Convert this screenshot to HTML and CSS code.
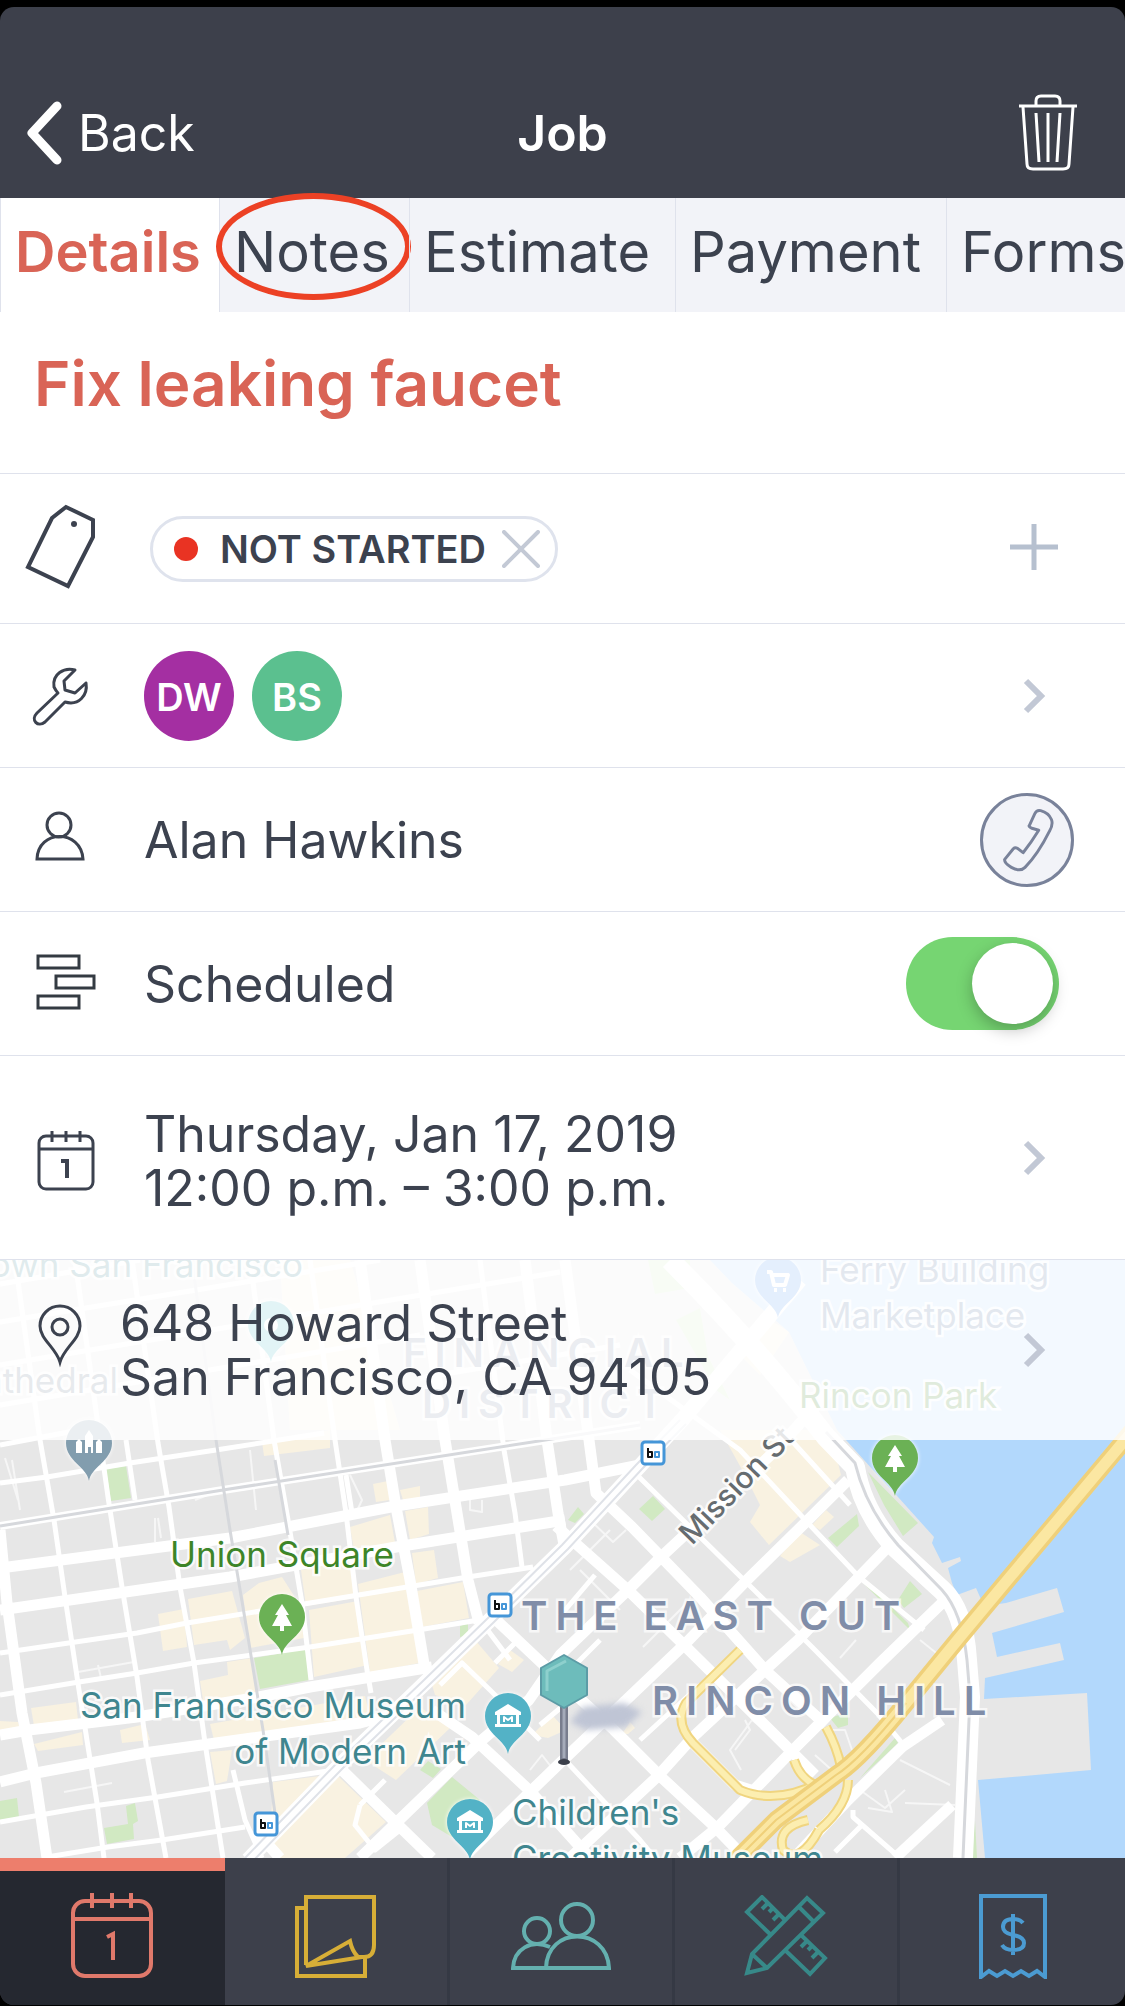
FILE: index.html
```html
<!DOCTYPE html>
<html lang="en">
<head>
    <meta charset="utf-8">
    <meta name="viewport" content="width=device-width, initial-scale=1">
    <title>Job</title>
    <link rel="stylesheet" href="styles.css">
</head>
<body>
<div class="app">
    <header class="header">
        <button type="button" class="back">
            <svg width="36" height="64" viewBox="0 0 36 64"><path d="M31 5 L6 32 L31 59" fill="none" stroke="#fff" stroke-width="9" stroke-linecap="round" stroke-linejoin="round"/></svg>
            Back
        </button>
        <h1>Job</h1>
        <button type="button" class="trash" aria-label="Delete job">
            <svg width="58" height="78" viewBox="0 0 58 78" fill="none" stroke="#fff" stroke-width="3">
                <path d="M0 12 H58"/>
                <path d="M17 11 V7 Q17 2 22 2 H36 Q41 2 41 7 V11"/>
                <path d="M4 13 L8 70 Q8 75 14 75 H44 Q50 75 50 70 L54 13"/>
                <path d="M17 19 L20 68 M29 19 V68 M41 19 L38 68"/>
            </svg>
        </button>
    </header>

    <nav class="tabs">
        <button type="button" class="active">Details</button>
        <button type="button" class="marked">Notes</button>
        <button type="button">Estimate</button>
        <button type="button">Payment</button>
        <button type="button">Forms</button>
    </nav>

    <main class="details">
        <h2>Fix leaking faucet</h2>

        <div class="row row-tags">
            <svg class="icon" viewBox="0 3 80 84" height="84"><path d="M46 3 L32 14 L8 63 L48 82 L73 33 V16 Z" fill="none" stroke="#3c424f" stroke-width="4"/><circle cx="54" cy="20" r="3" fill="#3c424f"/></svg>
            <div class="content">
                <span class="tag">
                    <span class="dot"></span>
                    NOT STARTED
                    <button type="button" aria-label="Remove tag"><svg width="38" height="38" viewBox="0 0 38 38"><path d="M2 2 L36 36 M36 2 L2 36" stroke="#c3c9d5" stroke-width="4" stroke-linecap="round"/></svg></button>
                </span>
            </div>
            <button type="button" aria-label="Add tag"><svg width="50" height="50" viewBox="0 3 50 50"><path d="M25 3 V49 M1 26 H49" stroke="#b6c0cf" stroke-width="5"/></svg></button>
        </div>

        <div class="row">
            <svg class="icon" viewBox="0 0 80 80" height="80"><path d="M55 14 C44 11 32 18 34 31 Q36 35 38 37 L17 57 C10 64 18 72 25 66 L45 46 C59 50 68 39 66 27 L55 37 L45 34 L44 25 Z" fill="none" stroke="#3c424f" stroke-width="3" stroke-linejoin="round"/></svg>
            <div class="content people">
                <span class="avatar purple">DW</span>
                <span class="avatar green">BS</span>
            </div>
            <button type="button" aria-label="Edit team"><svg class="chevron" viewBox="0 0 50 50"><path d="M17 10 L32 25 L17 40"/></svg></button>
        </div>

        <div class="row row-customer">
            <svg class="icon" viewBox="0 1 80 80" height="80" fill="none" stroke="#3c424f" stroke-width="3"><circle cx="39" cy="26" r="12"/><path d="M17 60 C18 30 61 30 63 60 Z"/></svg>
            <div class="content">Alan Hawkins</div>
            <button type="button" class="call" aria-label="Call customer"><svg width="88" height="88" viewBox="0 0 90 90"><path d="M47 31 L53 18 Q55 14 59 15 Q67 17 70 24 Q72 29 68 36 Q56 60 43 73 Q38 78 29 73 Q22 69 22 65 L31 54 Q33 52 36 54 L41 58 Q49 48 57 35 L50 33 Q47 32 47 30" fill="none" stroke="#79829a" stroke-width="3" stroke-linejoin="round"/></svg></button>
        </div>

        <div class="row">
            <svg class="icon" viewBox="0 0 80 80" height="80" fill="none" stroke="#343b42" stroke-width="3"><path d="M18 12 H59 V24 H18 Z M36 32 H74 V44 H36 Z M18 52 H59 V64 H18 Z"/></svg>
            <label class="content" for="scheduled">Scheduled</label>
            <input type="checkbox" id="scheduled" class="toggle" checked>
        </div>

        <div class="row row-date">
            <svg class="icon" viewBox="0 4 80 80" height="80" fill="none" stroke="#3c424f" stroke-width="3"><rect x="19" y="19" width="54" height="53" rx="7"/><path d="M19 32 H73 M32 14 V25 M46 14 V25 M60 14 V25"/><path d="M41 44 H47 V61" stroke-width="4"/></svg>
            <div class="content">Thursday, Jan 17, 2019<br>12:00 p.m. – 3:00 p.m.</div>
            <button type="button" aria-label="Edit schedule"><svg class="chevron" viewBox="0 3 50 50"><path d="M17 10 L32 25 L17 40"/></svg></button>
        </div>

        <section class="map">
            <svg class="map-art" viewBox="0 0 1125 598" preserveAspectRatio="xMidYMin slice">
                <defs>
                    <path id="drop" d="M0 37 C-2 23 -23 17 -23 -1 A23 23 0 0 1 23 -1 C23 17 2 23 0 37 Z"/>
                    <path id="tree" d="M0 -14 L7 -3 H4 L10 8 H2 V13 H-2 V8 H-10 L-4 -3 H-7 Z" fill="#fff"/>
                    <g id="museum"><path d="M0 -13 L13 -5 V-2 H-13 V-5 Z M-13 7 H13 V10 H-13 Z M-11 -2 H-8 V7 H-11 Z M8 -2 H11 V7 H8 Z" fill="#fff"/><path d="M-4 5 V0 L0 3 L4 0 V5" fill="none" stroke="#fff" stroke-width="2"/></g>
                    <g id="bike"><rect x="-11" y="-11" width="22" height="22" rx="3" fill="#fff" stroke="#4596d8" stroke-width="3"/><path d="M-5 -5 V4 H-1 V-1 H-5" fill="none" stroke="#111" stroke-width="2"/><path d="M2 -1 H6 V4 H2 Z" fill="none" stroke="#4596d8" stroke-width="2"/></g>
                </defs>
                <rect width="1125" height="598" fill="#e7e7e7"/>

                <!-- commercial blocks -->
                <g fill="#f9f2e1">
                    <path d="M262 182 L330 170 V188 L264 196 Z M280 0 L350 0 L400 170 L290 170 Z"/>
                    <path d="M350 267 L390 255 L396 288 L355 296 Z M373 224 L388 221 L390 240 L376 242 Z M400 230 L420 226 L420 238 L403 240 Z"/>
                    <path d="M405 251 L428 247 L429 274 L410 280 Z M412 293 L434 290 L438 318 L416 324 Z M417 331 L463 322 L469 358 L422 367 Z"/>
                    <path d="M301 310 L350 300 L356 338 L306 346 Z M358 324 L405 312 L424 402 L370 413 Z"/>
                    <path d="M309 350 L358 341 L368 405 L314 417 Z M188 339 L232 331 L245 378 L230 390 L227 380 L194 385 Z M259 323 L282 317 L298 342 L304 378 L250 388 L243 335 Z"/>
                    <path d="M158 354 L184 349 L187 387 L163 391 Z M227 402 L252 398 L258 436 L204 446 L200 421 L228 415 Z"/>
                    <path d="M31 448 L76 442 L78 460 L34 466 Z M34 484 L82 472 L83 485 L38 491 Z M0 461 L18 462 L20 468 L0 472 Z M120 470 L145 464 L150 480 L122 483 Z"/>
                    <path d="M210 464 L365 436 L370 456 L214 480 Z M210 492 L232 490 L227 521 L216 524 Z"/>
                    <path d="M273 522 L336 514 L386 562 L345 598 H277 L270 580 Z"/>
                    <path d="M430 418 L475 380 L499 408 L466 445 L435 435 Z M365 500 L420 447 L450 468 L396 520 Z M510 390 L524 400 L512 412 L498 404 Z M532 475 L552 455 L566 470 L548 478 Z"/>
                    <path d="M720 170 L830 170 L841 215 L805 250 L769 285 L750 262 L760 245 L745 215 Z M780 296 L800 272 L820 285 L790 302 Z M812 265 L826 250 L834 257 L820 270 Z"/>
                    <path d="M622 474 L630 462 L635 468 L628 474 Z M770 60 L789 72 L760 115 L740 95 Z"/>
                </g>

                <!-- parks -->
                <g fill="#d1e9c2">
                    <path d="M106 209 L126 206 L131 238 L111 241 Z M254 398 L306 389 L309 420 L260 429 Z"/>
                    <path d="M0 541 L17 538 L19 557 L0 560 Z M104 568 L128 564 L126 546 L135 543 L138 561 L133 564 L134 579 L107 584 Z"/>
                    <path d="M427 543 L452 517 L480 540 L452 577 L432 565 Z M420 510 L428 501 L441 509 L433 518 Z M460 366 L468 363 L468 375 L460 377 Z"/>
                    <path d="M639 249 L653 236 L665 249 L652 261 Z M568 260 L578 247 L584 254 L575 263 Z M828 278 L857 254 L859 266 L837 287 Z"/>
                    <path d="M868 212 L918 263 L903 276 L884 245 Z M830 458 L848 452 L848 465 L838 468 Z M862 322 L910 370 L908 363 L866 322 Z"/>
                    <path d="M898 340 L910 321 L922 334 L904 348 Z M860 518 L895 478 L898 483 L880 500 Z M972 598 L975 560 L977 598 Z"/>
                    <path d="M648 0 H690 V28 L655 34 Z M676 60 L700 48 L708 96 L730 140 L716 130 Z"/>
                </g>

                <!-- bay and piers -->
                <path d="M837 170 L873 210 L898 237 L934 277 L932 283 L942 303 L960 297 L961 301 L948 308 L952 323 L957 335 L976 328 L984 346 L1006 343 L1057 328 L1064 352 L992 373 L997 397 L1060 383 L1064 400 L985 418 L984 439 L1087 433 L1091 510 L978 520 L985 598 H1125 V0 H710 L732 23 L789 72 Z" fill="#b2d8fc"/>

                <g class="minor">
                    <path d="M5 198 L18 240 M12 200 L20 250 M155 258 V282 M158 258 L161 278 M250 190 L256 250 M350 215 L362 240 L356 253 M470 240 V250 L482 252 V240"/>
                    <path d="M78 412 L134 402 M98 405 L101 418 M64 532 L112 523 M195 240 L215 232 M530 510 L542 495 L552 508 L536 520"/>
                    <path d="M590 260 L613 282 L626 270 M570 310 L610 270 M735 490 L750 470 L745 460 M741 510 L730 490 L752 460 L765 470 M825 470 L845 470 L852 490 M815 495 L834 512"/>
                    <path d="M860 530 L885 548 L905 530 M868 548 L892 552 L885 530 M905 543 L955 545 M900 500 L950 525 M840 398 L856 380 M920 380 L945 400"/>
                    <path d="M643 387 L690 340 M580 310 L620 350 M770 420 L800 450"/>
                </g>

                <g class="street">
                    <path d="M0 185 L90 168 M0 223 L47 217 L130 203 L216 190 L324 173"/>
                    <path d="M0 393 L137 373 L187 363 L310 343 L468 317 L533 307"/>
                    <path d="M0 435 L79 422 L137 413 L194 403 L310 387 L418 370 L479 360"/>
                    <path d="M0 562 L86 547 L158 537 L245 523 L335 510 M47 597 L108 587 L162 580 L245 567"/>
                    <path d="M0 145 L420 75 M0 105 L560 12 M0 62 L380 0 M0 24 L140 0 M420 118 L620 85"/>
                    <path d="M15 0 L40 180 L54 260 L65 337 L79 430 L97 543 L104 598"/>
                    <path d="M75 0 L108 237 L122 327 L137 417 L148 500 L166 598 M126 180 L135 240"/>
                    <path d="M132 0 L158 183 L169 247 L180 327 L194 403 L205 483 L223 598"/>
                    <path d="M250 0 L274 180 L288 260 L302 343 L311 420"/>
                    <path d="M310 0 L335 180 L346 253 L356 337 L367 410 L371 433 M346 215 L352 253"/>
                    <path d="M480 0 L504 190 L515 253 L522 307"/>
                    <path d="M639 217 L747 323 L812 387 L877 453 L902 483 M630 110 L740 190 L808 263 L859 317 L924 370 M782 170 L850 245"/>
                    <path d="M233 510 L245 560 L262 598 M360 545 L385 520 M440 425 L462 403 L490 430 L540 480 M495 403 L520 378 M480 360 L510 400 M565 500 L640 580 L655 598"/>
                    <path d="M560 356 L595 315 M600 380 L560 420 M640 480 L700 425 M540 465 L570 440 M853 550 L853 557 L900 598 M862 565 L835 592"/>
                    <path d="M360 545 L355 565 L375 590 L400 570"/>
                </g>
                <g class="avenue">
                    <path d="M0 308 L230 278 L396 246 L565 220 L640 205"/>
                    <path d="M0 350 L230 317 L396 287 L565 260"/>
                    <path d="M0 475 L29 470 L137 457 L259 437 L310 427 L432 407"/>
                    <path d="M0 522 L36 513 L144 493 L252 478 L360 463 L410 450"/>
                    <path d="M0 270 L7 343 L22 453 L36 523 L47 598"/>
                    <path d="M360 0 L385 180 L396 247 L410 320 L425 410"/>
                    <path d="M420 0 L445 180 L457 253 L468 320 L479 363"/>
                    <path d="M525 0 L547 180 L558 253 L565 290"/>
                    <path d="M360 598 L396 563 L482 480 L529 440 L560 395 L628 330 L661 297 L776 190 L830 130"/>
                    <path d="M468 593 L529 533 L560 503 L686 383 L747 320 L808 260 L848 220"/>
                    <path d="M570 598 L657 517 L693 477 L765 410 L798 380 L859 317 L888 287"/>
                    <path d="M680 598 L718 567 L790 493 L880 403 L942 343"/>
                    <path d="M794 598 L848 540 L902 487 L942 460 M895 598 L952 545"/>
                    <path d="M565 0 L589 180 L596 233 L632 267 L700 337 L765 410 L826 465"/>
                    <path d="M556 266 L628 330 L682 383 L790 490 L815 515"/>
                    <path d="M493 357 L565 425 L614 470 L661 517 L715 567 L745 598"/>
                    <path d="M432 450 L472 477 L529 530 L590 598 M342 510 L396 563 L432 598 M255 570 L280 598"/>
                    <path d="M690 480 L735 525 L760 533"/>
                </g>

                <!-- rail lines -->
                <path d="M0 266 L223 230 L565 177 L640 165" class="rail-bed"/>
                <path d="M248 600 L338 507 L425 423 L490 360 L565 287 L639 207 L682 160 L800 20" class="rail-bed wide"/>
                <path d="M0 266 L223 230 L565 177 L640 165 M192 0 L216 180 L230 270 L248 377 L263 470 L275 553 M275 200 L288 275" class="rail"/>
                <path d="M245 598 L335 505 L423 421 L488 358 L562 285 L636 205 L680 160 M252 602 L342 509 L429 425 L494 362 L568 289 L642 209 L686 164" class="rail thin"/>
                <path d="M670 0 Q760 90 826 177 L855 207 Q862 250 895 287 L942 330 Q964 350 967 400 L970 437 L963 598" class="waterfront"/>
                <path d="M826 172 L855 203 Q866 248 898 285 L942 330 Q962 352 967 400 L970 437 L963 598" class="rail"/>

                <!-- freeway -->
                <path class="freeway-edge" d="M740 390 L686 443 Q674 463 693 483 L740 530 Q776 545 819 523 M826 467 Q837 487 841 507 M794 500 Q800 518 815 525 M848 520 Q848 545 819 570 M808 560 Q776 567 783 590 Q800 605 819 570"/>
                <path class="freeway" d="M740 390 L686 443 Q674 463 693 483 L740 530 Q776 545 819 523 M826 467 Q837 487 841 507 M794 500 Q800 518 815 525 M848 520 Q848 545 819 570 M808 560 Q776 567 783 590 Q800 605 819 570"/>
                <path class="bridge-edge" d="M1145 156 L1010 317 L960 377 L906 443 Q860 500 836 515 L776 560 L730 606"/>
                <path class="bridge" d="M1145 156 L1010 317 L960 377 L906 443 Q860 500 836 515 L776 560 L730 606"/>
                <path class="bridge-line" d="M906 443 Q860 500 836 515 L776 560 L730 606"/>

                <!-- place labels -->
                <g class="label">
                    <text x="303" y="17" text-anchor="end" fill="#3f868f">Downtown San Francisco</text>
                    <text x="118" y="133" text-anchor="end" fill="#6b7b8f">Cathedral</text>
                    <text x="820" y="22" fill="#52709c">Ferry Building</text>
                    <text x="820" y="68" fill="#52709c">Marketplace</text>
                    <text x="799" y="148" fill="#3d8528">Rincon Park</text>
                    <text x="170" y="307" fill="#3d8528">Union Square</text>
                    <text x="466" y="458" text-anchor="end" fill="#3f868f">San Francisco Museum</text>
                    <text x="466" y="504" text-anchor="end" fill="#3f868f">of Modern Art</text>
                    <text x="512" y="565" fill="#3f868f">Children's</text>
                    <text x="512" y="611" fill="#3f868f">Creativity Museum</text>
                    <text transform="translate(692 286) rotate(-46)" fill="#666c70" class="road-name">Mission St</text>
                </g>
                <g class="district">
                    <text x="403" y="107">FINANCIAL</text>
                    <text x="422" y="158">DISTRICT</text>
                    <text x="521" y="370">THE EAST CUT</text>
                    <text x="652" y="455">RINCON HILL</text>
                </g>

                <!-- pins -->
                <g class="poi" transform="translate(778 21)"><use href="#drop" fill="#5b9cf0"/><path d="M-11 -9 H-7 L-4 4 H7 L10 -6 H-6 M-4 9 H-1 M5 9 H8" fill="none" stroke="#fff" stroke-width="4"/></g>
                <g class="poi" transform="translate(271 65)"><use href="#drop" fill="#4fbcc4"/><circle r="7" fill="#fff"/></g>
                <g class="poi" transform="translate(89 184)"><use href="#drop" fill="#829dae"/><path d="M-13 9 V-2 L-10 -5 L-7 -2 V9 Z M-4 9 V-8 L0 -14 L4 -8 V9 H2 V3 H-1 V9 Z M7 9 V-2 L10 -5 L13 -2 V9 Z" fill="#fff"/></g>
                <g class="poi" transform="translate(282 358)"><use href="#drop" fill="#6bb155"/><use href="#tree"/></g>
                <g class="poi" transform="translate(895 199)"><use href="#drop" fill="#6bb155"/><use href="#tree"/></g>
                <g class="poi" transform="translate(508 457)"><use href="#drop" fill="#53b2c6"/><use href="#museum"/></g>
                <g class="poi" transform="translate(470 563)"><use href="#drop" fill="#53b2c6"/><use href="#museum"/></g>
                <use href="#bike" transform="translate(500 345)"/>
                <use href="#bike" transform="translate(266 564)"/>
                <use href="#bike" transform="translate(653 193)"/>

                <!-- job location -->
                <path class="pin-shadow" d="M570 462 L583 447 L624 443 L642 452 L626 467 L586 470 Z"/>
                <path d="M564 446 V500" stroke="#787d8d" stroke-width="8"/>
                <path d="M564 446 V498" stroke="#a5abb9" stroke-width="3"/>
                <ellipse cx="564" cy="502" rx="6" ry="3" fill="#3c404b"/>
                <path d="M564 395 L587 408 V435 L564 448 L541 435 V408 Z" fill="#6dbcbb" stroke="#5c9ca6" stroke-width="2"/>
                <path d="M547 431 V411 L566 401" fill="none" stroke="#8ed0cd" stroke-width="3"/>
            </svg>
            <div class="row address">
                <svg class="icon" viewBox="0 16 80 80" height="80" fill="none" stroke="#3c424f" stroke-width="3"><path d="M40 68 C36 54 20 45 20 32 A20 20 0 0 1 60 32 C60 45 44 54 40 68 Z"/><circle cx="40" cy="33" r="8"/></svg>
                <div class="content">648 Howard Street<br>San Francisco, CA 94105</div>
                <button type="button" aria-label="Open address"><svg class="chevron" viewBox="0 0 50 50"><path d="M17 10 L32 25 L17 40"/></svg></button>
            </div>
        </section>
    </main>

    <nav class="bottom-bar">
        <a href="#" class="current" aria-label="Schedule">
            <svg width="84" height="86" viewBox="0 0 84 86" fill="none" stroke="#e0796b" stroke-width="4"><rect x="3" y="9" width="78" height="75" rx="12"/><path d="M3 27 H81 M22 1 V16 M42 1 V16 M61 1 V16"/><path d="M37 45 L43 42 V68"/></svg>
        </a>
        <a href="#" aria-label="Estimates">
            <svg width="84" height="86" viewBox="0 0 84 86" fill="none" stroke="#d7ae37" stroke-width="4"><path d="M12 72 V4 H80 V52 Q80 64 70 64 H64 Q58 58 56 48 L12 73 L68 64"/><path d="M11 15 H3 V83 H71 V64"/></svg>
        </a>
        <a href="#" aria-label="Customers">
            <svg width="100" height="72" viewBox="0 0 100 72" fill="none" stroke="#64b0af" stroke-width="4"><circle cx="66" cy="20" r="16"/><path d="M35 68 C36 26 96 26 98 68 Z"/><circle cx="26" cy="31" r="13"/><path d="M39 47 C20 39 3 49 2 68 H36"/></svg>
        </a>
        <a href="#" aria-label="Jobs">
            <svg width="84" height="82" viewBox="0 0 84 82" fill="none" stroke="#378989" stroke-width="4">
                <path d="M3 78 L8 59 L63 3 L79 18 L23 73 Z M8 59 L23 73 M55 12 L70 27"/>
                <path d="M27 40 L3 17 L18 2 L41 25 M24 8 L18 14 M29 13 L25 17 M35 19 L29 25"/>
                <path d="M42 56 L66 79 L81 63 L57 40 M63 46 L57 52 M68 51 L64 55 M74 57 L68 63"/>
            </svg>
        </a>
        <a href="#" aria-label="Invoices">
            <svg width="70" height="86" viewBox="0 0 70 86" fill="none" stroke="#4b9bd2" stroke-width="4"><path d="M3 84 V3 H67 V84 L59 78 L51 83 L43 78 L35 83 L27 78 L19 83 L11 78 Z"/><path d="M45 30 Q42 26 35 26 Q25 26 25 34 Q25 40 35 42 Q46 44 46 50 Q46 57 35 57 Q27 57 24 52 M35 21 V62"/></svg>
        </a>
    </nav>
</div>
</body>
</html>
```
FILE: styles.css
```css
* {
    box-sizing: border-box;
}

body {
    margin: 0;
    background: #000;
    color: #3c424f;
    font-family: Inter, "Liberation Sans", sans-serif;
    font-size: 50px;
    line-height: 54px;
}

button {
    padding: 0;
    border: 0;
    background: none;
    color: inherit;
    font: inherit;
    cursor: pointer;
}

svg {
    display: block;
}

.app {
    display: flex;
    flex-direction: column;
    min-height: 100vh;
    padding: 7px 0 1px;
}

/* header */
.header {
    display: grid;
    grid-template-columns: 1fr auto 1fr;
    align-items: center;
    height: 191px;
    padding: 60px 26px 0;
    border-radius: 14px 14px 0 0;
    background: #3d404b;
    color: #fff;
}

.header h1 {
    margin: 0;
    font-size: 50px;
    font-weight: 600;
}

.back {
    display: flex;
    align-items: center;
    justify-self: start;
    gap: 16px;
}

.trash {
    justify-self: end;
    margin-right: 22px;
}

/* tabs */
.tabs {
    display: grid;
    grid-template-columns: 219px 190px 266px 271px 1fr;
    height: 114px;
    background: #f2f3f8;
}

.tabs button {
    position: relative;
    padding: 0 0 6px 14px;
    border-left: 1px solid #dfe2ec;
    font-size: 56px;
    text-align: left;
    white-space: nowrap;
}

.tabs .active {
    background: #fff;
    color: #d96456;
    font-weight: 600;
}

.tabs button:last-child {
    overflow: hidden;
}

.marked::after {
    content: "";
    position: absolute;
    inset: -5px -2px 12px -4px;
    border: 6px solid #ec4125;
    border-radius: 50%;
}

/* job details */
.details {
    display: flex;
    flex: 1;
    flex-direction: column;
    background: #fff;
}

.details h2 {
    margin: 0;
    padding: 40px 34px 57px;
    border-bottom: 1px solid #dfe2ec;
    color: #d96456;
    font-size: 62px;
    font-weight: 600;
    line-height: 64px;
}

.row {
    display: flex;
    align-items: center;
    gap: 44px;
    min-height: 144px;
    padding: 0 66px 0 20px;
    border-bottom: 1px solid #dfe2ec;
}

.row-tags {
    min-height: 150px;
}

.row-customer {
    padding-right: 51px;
}

.row-date {
    min-height: 204px;
    padding-top: 6px;
}

.icon {
    flex: none;
    width: 80px;
    overflow: visible;
}

.content {
    flex: 1;
}

.tag {
    display: inline-flex;
    align-items: center;
    height: 66px;
    margin-left: 6px;
    padding: 0 15px 0 21px;
    border: 3px solid #dfe3ed;
    border-radius: 33px;
    font-size: 38px;
    font-weight: 600;
}

.tag button {
    margin-left: 16px;
}

.dot {
    width: 24px;
    height: 24px;
    margin-right: 22px;
    border-radius: 50%;
    background: #e93323;
}

.people {
    display: flex;
    gap: 18px;
}

.avatar {
    width: 90px;
    height: 90px;
    border-radius: 50%;
    color: #fff;
    font-size: 38px;
    font-weight: 600;
    line-height: 92px;
    text-align: center;
}

.purple {
    background: #a42fa2;
}

.green {
    background: #5bc08f;
}

.chevron {
    width: 50px;
    height: 50px;
    fill: none;
    stroke: #c2c8d5;
    stroke-width: 6;
}

.call {
    width: 94px;
    height: 94px;
    border: 3px solid #79829a;
    border-radius: 50%;
    background: #f2f3f8;
}

.toggle {
    appearance: none;
    width: 153px;
    height: 93px;
    margin: 0;
    padding: 6px;
    border-radius: 47px;
    background: #d8dbe2;
    cursor: pointer;
}

.toggle::before {
    content: "";
    display: block;
    width: 81px;
    height: 81px;
    border-radius: 50%;
    background: #fff;
    box-shadow: 0 6px 16px rgba(0, 0, 0, 0.25);
}

.toggle:checked {
    background: #76d572;
}

.toggle:checked::before {
    margin-left: auto;
}

/* map */
.map {
    position: relative;
    flex: 1;
    min-height: 598px;
    overflow: hidden;
}

.map-art {
    position: absolute;
    inset: 0;
    width: 100%;
    height: 100%;
}

.address {
    position: relative;
    gap: 20px;
    min-height: 180px;
    border-bottom: 0;
    background: rgba(255, 255, 255, 0.84);
}

.map-art path {
    stroke-linejoin: round;
}

.minor {
    fill: none;
    stroke: #f6f6f6;
    stroke-width: 2;
}

.street {
    fill: none;
    stroke: #fff;
    stroke-width: 5;
}

.avenue {
    fill: none;
    stroke: #fff;
    stroke-width: 11;
}

.rail-bed {
    fill: none;
    stroke: #fff;
    stroke-width: 8;
}

.rail-bed.wide {
    stroke-width: 15;
}

.rail {
    fill: none;
    stroke: #d6d8dc;
    stroke-width: 3;
}

.rail.thin {
    stroke: #dfe2e8;
    stroke-width: 2;
}

.waterfront {
    fill: none;
    stroke: #fff;
    stroke-width: 20;
}

.freeway-edge {
    fill: none;
    stroke: #f0d580;
    stroke-width: 10;
}

.freeway {
    fill: none;
    stroke: #fceeb0;
    stroke-width: 6;
}

.bridge-edge {
    fill: none;
    stroke: #efd07a;
    stroke-width: 18;
}

.bridge {
    fill: none;
    stroke: #fbe7a2;
    stroke-width: 11;
}

.bridge-line {
    fill: none;
    stroke: #efd07a;
    stroke-width: 2;
}

.label {
    font-size: 35px;
    paint-order: stroke;
    stroke: rgba(255, 255, 255, 0.8);
    stroke-width: 5;
}

.road-name {
    font-size: 30px;
    font-weight: 500;
}

.district {
    fill: #808da8;
    font-size: 40px;
    font-weight: 600;
    letter-spacing: 8px;
    paint-order: stroke;
    stroke: rgba(255, 255, 255, 0.7);
    stroke-width: 5;
}

.poi {
    stroke-width: 0;
    filter: drop-shadow(0 0 2px #fff);
}

.pin-shadow {
    fill: #bfc5d5;
    filter: blur(3px);
}

/* bottom navigation */
.bottom-bar {
    display: grid;
    grid-template-columns: repeat(5, 1fr);
    height: 147px;
    overflow: hidden;
    border-radius: 0 0 14px 14px;
    background: #3d404b;
}

.bottom-bar a {
    display: flex;
    align-items: center;
    justify-content: center;
    padding-top: 8px;
    border-right: 3px solid #353944;
}

.bottom-bar a:last-child {
    border-right: 0;
}

.bottom-bar .current {
    padding: 0 2px 6px 0;
    border-top: 13px solid #ed7e6c;
    border-right: 0;
    background: #252830;
}
```
